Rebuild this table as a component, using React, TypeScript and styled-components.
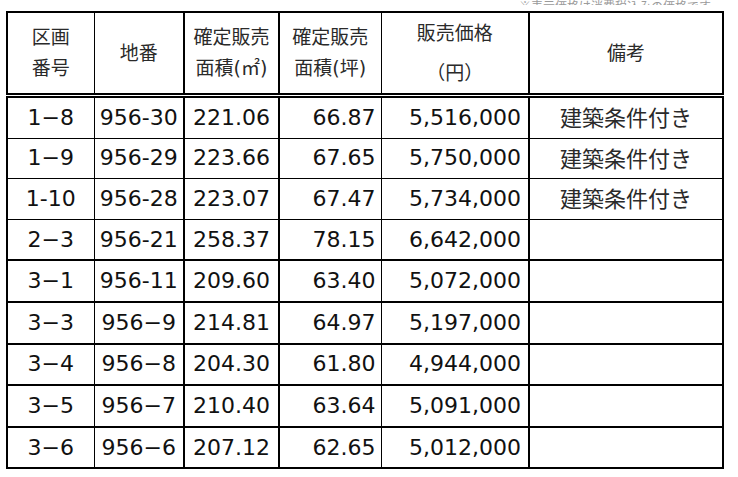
import styled, {createGlobalStyle} from "styled-components";

const GlobalStyle = createGlobalStyle`
    html, body {
        margin: 0;
        padding: 0;
        background: #ffffff;
    }
    body {
        font-family: "DejaVu Sans", "Noto Sans CJK JP", sans-serif;
        color: #111;
    }
`;

const PageWrapper = styled.div`
    width: 738px;
    height: 477px;
    padding: 0 0 0 6px;
    box-sizing: border-box;
    overflow: hidden;
`;

// only the lower edge of the note above the table is visible in the picture
const Caption = styled.div`
    height: 5px;
    overflow: hidden;
    width: 715px;
    text-align: right;
    font-family: "Noto Sans CJK JP", sans-serif;
    font-size: 12px;
    line-height: 12px;
    color: #9a9a9a;

    span {
        display: inline-block;
        margin-top: -8px;
        margin-right: 10px;
    }
`;

const Spacer = styled.div`
    height: 6px;
`;

const Table = styled.table`
    border-collapse: collapse;
    table-layout: fixed;
    width: 716px;
`;

type Align = "left" | "center" | "right";

const HeadCell = styled.th<{ $left: number; $right: number; $lh?: number }>`
    height: 80px;
    padding: 0;
    border-top: 2px solid #000;
    border-bottom: 5px double #000;
    border-left: ${p => p.$left}px solid #000;
    border-right: ${p => p.$right}px solid #000;
    font-family: "DejaVu Sans", "Noto Sans CJK JP", sans-serif;
    font-weight: 400;
    font-size: 19px;
    line-height: ${p => p.$lh ?? 31}px;
    color: #2a2a2a;
    text-align: center;
    vertical-align: middle;
    white-space: nowrap;
`;

const Cell = styled.td<{ $left: number; $right: number; $bottom: number; $align: Align; $pad: number }>`
    height: 39.6px;
    padding: 0 ${p => p.$pad}px;
    border-left: ${p => p.$left}px solid #000;
    border-right: ${p => p.$right}px solid #000;
    border-bottom: ${p => p.$bottom}px solid #000;
    font-size: 22px;
    line-height: 26px;
    text-align: ${p => p.$align};
    vertical-align: middle;
    white-space: nowrap;
    color: #111;
`;

const Note = styled.span`
    font-family: "Noto Sans CJK JP", sans-serif;
    font-size: 22px;
    color: #2a2a2a;
`;

const widths = [87, 90, 95, 102, 148, 194];
const lefts = [2, 1, 2, 2, 1, 2];
const rights = [1, 2, 2, 1, 2, 2];
const aligns: Align[] = ["center", "center", "center", "right", "right", "center"];
const pads = [0, 0, 0, 5, 7, 0];

const rows = [
    ["1\u22128", "956-30", "221.06", "66.87", "5,516,000", "建築条件付き"],
    ["1\u22129", "956-29", "223.66", "67.65", "5,750,000", "建築条件付き"],
    ["1-10", "956-28", "223.07", "67.47", "5,734,000", "建築条件付き"],
    ["2\u22123", "956-21", "258.37", "78.15", "6,642,000", ""],
    ["3\u22121", "956-11", "209.60", "63.40", "5,072,000", ""],
    ["3\u22123", "956\u22129", "214.81", "64.97", "5,197,000", ""],
    ["3\u22124", "956\u22128", "204.30", "61.80", "4,944,000", ""],
    ["3\u22125", "956\u22127", "210.40", "63.64", "5,091,000", ""],
    ["3\u22126", "956\u22126", "207.12", "62.65", "5,012,000", ""],
];

const headers: { lines: string[]; lh?: number }[] = [
    {lines: ["区画", "番号"]},
    {lines: ["地番"]},
    {lines: ["確定販売", "面積(㎡)"]},
    {lines: ["確定販売", "面積(坪)"]},
    {lines: ["販売価格", "（円）"], lh: 40},
    {lines: ["備考"]},
];

const App = () => {
    return (
        <>
            <GlobalStyle/>
            <PageWrapper>
                <Caption><span>※表示価格は消費税込みの価格です</span></Caption>
                <Spacer/>
                <Table>
                    <colgroup>
                        {widths.map((w, i) => <col key={i} style={{width: w}}/>)}
                    </colgroup>
                    <thead>
                    <tr>
                        {headers.map((h, i) => (
                            <HeadCell key={i} $left={lefts[i]} $right={rights[i]} $lh={h.lh}>
                                {h.lines.map((l, j) => <div key={j}>{l}</div>)}
                            </HeadCell>
                        ))}
                    </tr>
                    </thead>
                    <tbody>
                    {rows.map((r, ri) => (
                        <tr key={ri}>
                            {r.map((v, ci) => (
                                <Cell
                                    key={ci}
                                    $left={lefts[ci]}
                                    $right={rights[ci]}
                                    $bottom={ri < 3 ? 1 : 2}
                                    $align={aligns[ci]}
                                    $pad={pads[ci]}
                                >
                                    {ci === 5 ? <Note>{v}</Note> : v}
                                </Cell>
                            ))}
                        </tr>
                    ))}
                    </tbody>
                </Table>
            </PageWrapper>
        </>
    );
};

export default App;
